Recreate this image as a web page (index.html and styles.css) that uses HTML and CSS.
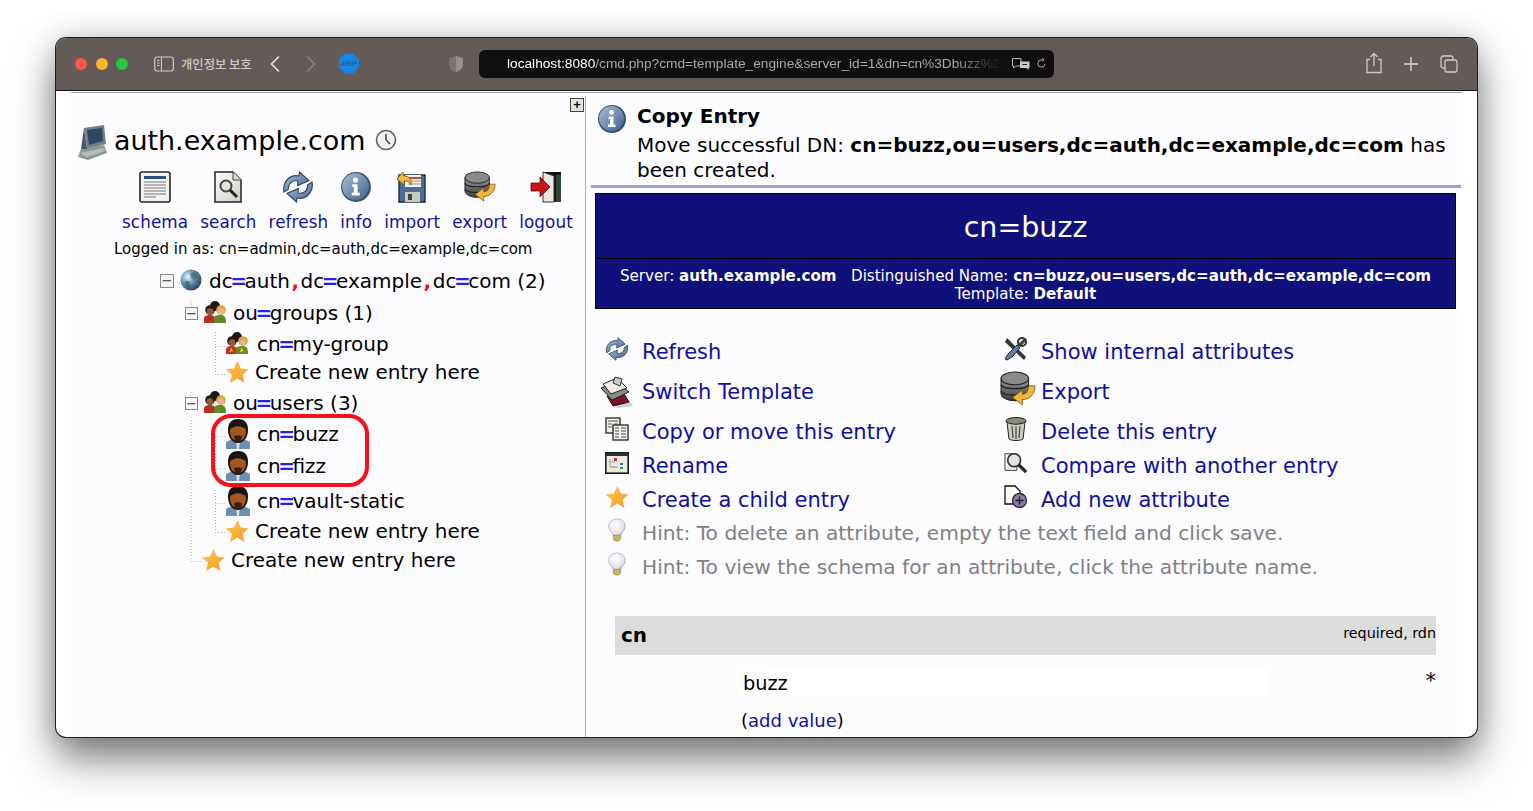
FILE: index.html
```html
<!DOCTYPE html>
<html lang="en">
<head>
<meta charset="utf-8">
<title>phpLDAPadmin</title>
<link rel="stylesheet" href="styles.css">
</head>
<body>
<svg class="sprite" aria-hidden="true">
  <defs>
    <linearGradient id="gBlue" x1="0" y1="0" x2="1" y2="1"><stop offset="0" stop-color="#a9bfd8"/><stop offset="1" stop-color="#3f648e"/></linearGradient>
    <linearGradient id="gGrey" x1="0" y1="0" x2="0" y2="1"><stop offset="0" stop-color="#9a9a9a"/><stop offset="1" stop-color="#3c3c3c"/></linearGradient>
    <linearGradient id="gPaper" x1="0" y1="0" x2="1" y2="1"><stop offset="0" stop-color="#ffffff"/><stop offset="1" stop-color="#cfcdc4"/></linearGradient>
    <linearGradient id="gStar" x1="0" y1="0" x2="1" y2="1"><stop offset="0" stop-color="#ffc85a"/><stop offset="1" stop-color="#f59a1f"/></linearGradient>
    <radialGradient id="gGlobe" cx=".35" cy=".35" r=".75"><stop offset="0" stop-color="#e8f1f8"/><stop offset=".5" stop-color="#5d8cb8"/><stop offset="1" stop-color="#1e3650"/></radialGradient>
    <radialGradient id="gBulb" cx=".4" cy=".35" r=".7"><stop offset="0" stop-color="#ffffff"/><stop offset=".75" stop-color="#dfe4e8"/><stop offset="1" stop-color="#9fa6ac"/></radialGradient>

    <symbol id="i-server" viewBox="0 0 32 38">
      <path d="M8 4 28 1 30 20 11 25Z" fill="#6f7f8c"/>
      <path d="M11 6 26 4 27 17 13 21Z" fill="#2c4a66"/>
      <path d="M5 25 28 21 31 29 12 36 2 33Z" fill="#8d9794"/>
      <path d="M4 29 27 24 29 27 11 33Z" fill="#b4bcb8"/>
      <path d="M8 4 11 25 5 25Z" fill="#495864"/>
    </symbol>
    <symbol id="i-clock" viewBox="0 0 22 22">
      <circle cx="11" cy="11" r="9.5" fill="#f1f1ee" stroke="#5f5f5f" stroke-width="1.6"/>
      <path d="M11 5v6l4 4" fill="none" stroke="#333" stroke-width="1.4"/>
    </symbol>
    <symbol id="i-schema" viewBox="0 0 32 32">
      <rect x="1" y="1" width="30" height="30" rx="2" fill="#f3f3ef" stroke="#222" stroke-width="1.6"/>
      <rect x="5" y="5" width="22" height="3" fill="#2c4f7c"/>
      <path d="M5 11h22M5 14h22M5 17h22M5 20h22M5 23h22M5 26h12" stroke="#777" stroke-width="1.2"/>
    </symbol>
    <symbol id="i-search" viewBox="0 0 30 32">
      <path d="M2 1H20L28 9V31H2Z" fill="url(#gPaper)" stroke="#222" stroke-width="1.5"/>
      <path d="M20 1V9H28" fill="#ddd" stroke="#444"/>
      <circle cx="13" cy="15" r="5.5" fill="#dfe6dd" stroke="#444" stroke-width="2"/>
      <path d="M17 19 24 26" stroke="#222" stroke-width="3"/>
    </symbol>
    <symbol id="i-refresh" viewBox="0 0 32 32">
      <path d="M2 21C0 11 8 3 17 5L17.500 1 27 9.500 15.500 14.500 16 10C11 9 6 12 6.500 18Z" fill="url(#gBlue)" stroke="#2f4256" stroke-width="1.100"/>
      <path d="M30 11C32 21 24 29 15 27L14.500 31 5 22.500 16.500 17.500 16 22C21 23 26 20 25.500 14Z" fill="url(#gBlue)" stroke="#2f4256" stroke-width="1.100"/>
    </symbol>
    <symbol id="i-info" viewBox="0 0 30 30">
      <circle cx="15" cy="15" r="14" fill="#38506a"/>
      <circle cx="14.5" cy="14.5" r="12.5" fill="url(#gBlue)"/>
      <circle cx="14.5" cy="8.5" r="2.4" fill="#fff"/>
      <path d="M11.5 12.5h5v8h2v2.500h-7.500v-2.500h2v-5.500h-1.500Z" fill="#fff"/>
    </symbol>
    <symbol id="i-import" viewBox="0 0 32 32">
      <path d="M3 4H29V31H3Z" fill="#4c6d8e" stroke="#1d2a38" stroke-width="1.4"/>
      <rect x="9" y="4" width="16" height="12" fill="#f3f0e6"/>
      <path d="M9 7h16" stroke="#c94a3c" stroke-width="2"/><path d="M12 10h13M12 13h13" stroke="#999"/>
      <rect x="9" y="21" width="15" height="10" fill="#c9c9c2"/><rect x="12" y="23" width="4" height="6" fill="#444"/>
      <path d="M1 8 7 1 8 5C13 5 16 8 15 14 13 10 11 10 8 10V14Z" fill="#f2b63a" stroke="#7a5510" stroke-width=".8"/>
    </symbol>
    <symbol id="i-db" viewBox="0 0 34 34">
      <path d="M1 7V21C1 25 7 28 14 28S27 25 27 21V7Z" fill="url(#gGrey)" stroke="#222"/>
      <ellipse cx="14" cy="7" rx="13" ry="6" fill="#8a8a8a" stroke="#222"/>
      <path d="M1 13C3 18 25 18 27 13M1 19C3 24 25 24 27 19" fill="none" stroke="#1c1c1c" stroke-width="1.2"/>
      <path d="M33 14C33 23 27 27 21 27V32L12 25 21 18V22C25 22 27 19 27 14Z" fill="#f2b63a" stroke="#8a6212" stroke-width=".9"/>
    </symbol>
    <symbol id="i-logout" viewBox="0 0 32 32">
      <rect x="13" y="1" width="18" height="30" fill="#111"/>
      <path d="M13 1 24 5V31H13Z" fill="#e9e7dc" stroke="#333"/>
      <path d="M26 4h5v27h-5Z" fill="#2e4636"/>
      <path d="M1 12H10V6L20 16 10 26V20H1Z" fill="#c5141a" stroke="#5b0a0c" stroke-width=".8"/>
    </symbol>
    <symbol id="i-globe" viewBox="0 0 22 22">
      <circle cx="11" cy="11" r="10.500" fill="url(#gGlobe)"/>
      <path d="M10 4 15 3 18 8 14 11 11 9ZM5 12 9 12 11 17 8 20 5 16Z" fill="#3a5b52" opacity=".6"/>
    </symbol>
    <symbol id="i-group" viewBox="0 0 22 22">
      <circle cx="11" cy="5" r="5" fill="#1f1713"/>
      <circle cx="17" cy="9" r="4.800" fill="#d9a93c"/>
      <circle cx="17" cy="10.500" r="3.200" fill="#e7b489"/>
      <circle cx="6" cy="9" r="4.800" fill="#1f1713"/>
      <circle cx="6" cy="10.500" r="3.300" fill="#9a5a30"/>
      <path d="M0 22V17C1 14 4 14 6 14 10 14 12 16 12 22Z" fill="#bb2b22"/>
      <path d="M10 22V17C11 14 14 14 16 14 20 14 22 15 22 22Z" fill="#5f8a2c"/>
    </symbol>
    <symbol id="i-group2" viewBox="0 0 22 22">
      <circle cx="11" cy="5" r="5" fill="#1f1713"/>
      <circle cx="17" cy="9" r="4.800" fill="#d9a93c"/>
      <circle cx="17" cy="10.500" r="3.200" fill="#e7b489"/>
      <circle cx="6" cy="9" r="4.800" fill="#1f1713"/>
      <circle cx="6" cy="10.500" r="3.300" fill="#9a5a30"/>
      <path d="M0 22V17C1 14 4 14 6 14 10 14 12 16 12 22Z" fill="#cc2d22"/>
      <path d="M10 22V17C11 14 14 14 16 14 20 14 22 15 22 22Z" fill="#6c8a22"/>
      <path d="M5 15.500 7 19 3.500 20ZM15.500 15.500 17.500 19 14 20Z" fill="#f5d23c"/>
    </symbol>
    <symbol id="i-star" viewBox="0 0 24 24">
      <path d="M12.500 1 15.800 8.600 23.500 9.500 17.600 14.700 19.500 23 12.500 18.600 5 23 7 14.700 .5 9.500 8.800 8.600Z" fill="url(#gStar)"/>
    </symbol>
    <symbol id="i-person" viewBox="0 0 24 30">
      <path d="M0 30V23C3 21 7 20 12 20S21 21 24 23V30Z" fill="#6f8eb0"/>
      <path d="M10 22h4l-1 8h-2Z" fill="#d6dde4"/>
      <path d="M12 0C5 0 2 4 2 11 2 18 6 24 12 24S22 18 22 11C22 4 19 0 12 0Z" fill="#1a1411"/>
      <path d="M4 11C7 6 17 6 20 11 20 18 17 22 12 22 7 22 4 18 4 11Z" fill="#a5581f"/>
      <path d="M8 17C10 16 14 16 16 17 16 20 14 23 12 23 10 23 8 20 8 17Z" fill="#3a2010"/>
    </symbol>
    <symbol id="i-template" viewBox="0 0 36 32">
      <path d="M14 22 30 24 34 30 18 32Z" fill="#999" opacity=".5"/>
      <path d="M8 20 25 18 30 26 14 30Z" fill="#7a1420" stroke="#2a0a0c"/>
      <path d="M2 12 18 6 30 16 13 24Z" fill="#8a8a88" stroke="#222"/>
      <path d="M4 8 18 2 28 12 12 18Z" fill="#ececea" stroke="#222"/>
      <path d="M16 1 23 3 21 10 14 7Z" fill="#c9c9c5" stroke="#333"/>
    </symbol>
    <symbol id="i-copy" viewBox="0 0 24 24">
      <rect x="1" y="1" width="14" height="15" fill="#f1f1ec" stroke="#222" stroke-width="1.300"/>
      <path d="M3 4h10M3 7h4M9 7h4M3 10h4" stroke="#555"/>
      <rect x="8" y="8" width="15" height="15" fill="#f1f1ec" stroke="#222" stroke-width="1.300"/>
      <path d="M10 11h4M16 11h5M10 14h4M16 14h5M10 17h4M16 17h5M10 20h4M16 20h5" stroke="#444"/>
    </symbol>
    <symbol id="i-rename" viewBox="0 0 24 22">
      <rect x=".8" y=".8" width="22.400" height="20.400" fill="#ece9df" stroke="#1a1a1a" stroke-width="1.600"/>
      <rect x="1" y="1" width="22" height="3" fill="#2a2f38"/>
      <path d="M5 7V15H10M5 10H10M13 15H8" stroke="#9a9a9a" fill="none"/>
      <rect x="9" y="6" width="3" height="3" fill="#c43030"/><rect x="15" y="11" width="3" height="2" fill="#2f6fb0"/><rect x="15" y="15" width="3" height="2" fill="#3a9a48"/>
    </symbol>
    <symbol id="i-tools" viewBox="0 0 24 24">
      <path d="M3 1 22 20 20 23 1 5Z" fill="#333"/>
      <path d="M21 1 23 3 16 10 13 8Z" fill="#444"/>
      <path d="M13 8 4 17 1 22 3 23 8 20 16 11Z" fill="#5e7f9f" stroke="#233"/>
      <circle cx="18" cy="5" r="4" fill="none" stroke="#333" stroke-width="2"/>
    </symbol>
    <symbol id="i-trash" viewBox="0 0 22 24">
      <ellipse cx="11" cy="4" rx="10" ry="3.500" fill="#8b8b80" stroke="#222"/>
      <path d="M2 5 4 22C6 24 16 24 18 22L20 5C16 8 6 8 2 5Z" fill="#cfcdbf" stroke="#222"/>
      <path d="M7 9 8 21M11 9V22M15 9 14 21" stroke="#555" stroke-width="1.400"/>
    </symbol>
    <symbol id="i-compare" viewBox="0 0 26 24">
      <path d="M1 2H14V20H1Z" fill="#f4f4f0" stroke="#333"/>
      <circle cx="11" cy="9" r="7" fill="#dfe4e4" stroke="#333" stroke-width="1.800"/>
      <path d="M16 14 24 22" stroke="#222" stroke-width="3.500"/>
    </symbol>
    <symbol id="i-add" viewBox="0 0 24 24">
      <path d="M1 1H11L16 6V19H1Z" fill="#f8f8f4" stroke="#111" stroke-width="1.300"/>
      <circle cx="15.500" cy="15.500" r="7" fill="#8a7aa8" stroke="#2c2438" stroke-width="1.300"/>
      <path d="M15.500 11.500v8M11.500 15.500h8" stroke="#1c1428" stroke-width="1.400"/>
    </symbol>
    <symbol id="i-bulb" viewBox="0 0 20 26">
      <path d="M10 1C4.500 1 1 5 1 9.500 1 13.500 5 15 6 19H14C15 15 19 13.500 19 9.500 19 5 15.500 1 10 1Z" fill="url(#gBulb)" stroke="#a8aeb2" stroke-width=".8"/>
      <path d="M6 19H14V23L12 25H8L6 23Z" fill="#c9b45c" stroke="#8f8240" stroke-width=".6"/>
    </symbol>
  </defs>
</svg>

<main class="window">
  <header class="titlebar">
    <div class="lights"><span class="light red"></span><span class="light amber"></span><span class="light green"></span></div>
    <svg class="bar-icon sidebar-icon" viewBox="0 0 20 18"><rect x=".7" y="2" width="18.600" height="14" rx="2.500" fill="none" stroke="#cfcac7" stroke-width="1.200"/><path d="M7.500 2v14M3 5.500h2.500M3 8h2.500M3 10.500h2.500" stroke="#cfcac7" stroke-width="1.100"/></svg>
    <span class="privacy">개인정보 보호</span>
    <svg class="bar-icon chevron" viewBox="0 0 12 18"><path d="M10 1.500 2.500 9 10 16.500" fill="none" stroke="#e4e0de" stroke-width="1.700"/></svg>
    <svg class="bar-icon chevron forward" viewBox="0 0 12 18"><path d="M2 1.500 9.500 9 2 16.500" fill="none" stroke="#8a8280" stroke-width="1.700"/></svg>
    <span class="abp">ABP</span>
    <svg class="bar-icon shield" viewBox="0 0 16 18"><path d="M8 1 15 3V9C15 13 12 16 8 17 4 16 1 13 1 9V3Z" fill="#7d7573"/><path d="M8 1 15 3V9C15 13 12 16 8 17Z" fill="#968f8d"/></svg>
    <div class="urlbar">
      <span class="url"><b class="host">localhost:8080</b>/cmd.php?cmd=template_engine&amp;server_id=1&amp;dn=cn%3Dbuzz%2</span>
      <svg class="bar-icon translate" viewBox="0 0 20 14"><path d="M1.500 1.500H10V9H4.500L2.500 11V9H1.500Z" fill="none" stroke="#bdbdbd"/><path d="M9 4.500H18.500V11H17.500V13L15.500 11H9Z" fill="#c9c9c9"/><path d="M11.500 7.500h4.500" stroke="#111"/></svg>
      <svg class="bar-icon reload" viewBox="0 0 12 12"><path d="M9.800 6.500A4 4 0 1 1 6 2H8.500M7 .5 8.800 2 7 3.500" fill="none" stroke="#bdbdbd" stroke-width="1"/></svg>
    </div>
    <svg class="bar-icon share" viewBox="0 0 18 22"><path d="M5 7.500H2V20.500H16V7.500H13M9 14V1.500M5.500 5 9 1.500 12.500 5" fill="none" stroke="#cfcac7" stroke-width="1.300"/></svg>
    <svg class="bar-icon plus" viewBox="0 0 16 16"><path d="M8 1V15M1 8H15" stroke="#d8d4d2" stroke-width="1.400"/></svg>
    <svg class="bar-icon tabs" viewBox="0 0 18 18"><rect x="1" y="1" width="12" height="12" rx="2" fill="none" stroke="#cfcac7" stroke-width="1.300"/><rect x="5" y="5" width="12" height="12" rx="2" fill="#645a58" stroke="#cfcac7" stroke-width="1.300"/></svg>
  </header>

  <div class="page">
    <div class="rule"></div>
    <div class="frames">
      <aside class="left">
        <div class="expand-row"><span class="expand-btn">+</span></div>
        <div class="server-head">
          <svg class="server-icon"><use href="#i-server"/></svg>
          <h1 class="server-name">auth.example.com</h1>
          <svg class="clock-icon"><use href="#i-clock"/></svg>
        </div>
        <nav class="nav">
          <a class="nav-item"><svg class="nav-icon"><use href="#i-schema"/></svg><span>schema</span></a>
          <a class="nav-item"><svg class="nav-icon"><use href="#i-search"/></svg><span>search</span></a>
          <a class="nav-item"><svg class="nav-icon"><use href="#i-refresh"/></svg><span>refresh</span></a>
          <a class="nav-item"><svg class="nav-icon"><use href="#i-info"/></svg><span>info</span></a>
          <a class="nav-item"><svg class="nav-icon"><use href="#i-import"/></svg><span>import</span></a>
          <a class="nav-item"><svg class="nav-icon"><use href="#i-db"/></svg><span>export</span></a>
          <a class="nav-item"><svg class="nav-icon"><use href="#i-logout"/></svg><span>logout</span></a>
        </nav>
        <p class="logged">Logged in as: cn=admin,dc=auth,dc=example,dc=com</p>
        <div class="tree">
          <svg class="tree-lines" viewBox="0 0 100 300">
            <path d="M20 18.500V36M20 110V127M20 135V279.500H32M44.500 50V92.500H55M44.500 64.500H56M44.500 140V166M44.500 172V198M44.500 208V250.500H55M44.500 154.500H56M44.500 186.500H56M44.500 221.500H56M8 1.500H19"/>
          </svg>
          <div class="row r0"><span class="toggle">−</span><svg class="ti globe"><use href="#i-globe"/></svg><span class="dn">dc<i>=</i>auth<u>,</u>dc<i>=</i>example<u>,</u>dc<i>=</i>com (2)</span></div>
          <div class="row r1"><span class="toggle small">−</span><svg class="ti group"><use href="#i-group"/></svg><span class="dn">ou<i>=</i>groups (1)</span></div>
          <div class="row r2"><svg class="ti group"><use href="#i-group2"/></svg><span class="dn">cn<i>=</i>my-group</span></div>
          <div class="row r2 new"><svg class="ti star"><use href="#i-star"/></svg><span class="dn">Create new entry here</span></div>
          <div class="row r1"><span class="toggle small">−</span><svg class="ti group"><use href="#i-group"/></svg><span class="dn">ou<i>=</i>users (3)</span></div>
          <div class="row r2"><svg class="ti person"><use href="#i-person"/></svg><span class="dn">cn<i>=</i>buzz</span></div>
          <div class="row r2"><svg class="ti person"><use href="#i-person"/></svg><span class="dn">cn<i>=</i>fizz</span></div>
          <div class="row r2"><svg class="ti person"><use href="#i-person"/></svg><span class="dn">cn<i>=</i>vault-static</span></div>
          <div class="row r2 new"><svg class="ti star"><use href="#i-star"/></svg><span class="dn">Create new entry here</span></div>
          <div class="row r1b new"><svg class="ti star"><use href="#i-star"/></svg><span class="dn">Create new entry here</span></div>
          <div class="highlight"></div>
        </div>
      </aside>

      <section class="right">
        <div class="notice">
          <svg class="notice-icon"><use href="#i-info"/></svg>
          <div class="notice-body">
            <h2 class="notice-title">Copy Entry</h2>
            <p class="notice-text">Move successful DN: <b>cn=buzz,ou=users,dc=auth,dc=example,dc=com</b> has been created.</p>
          </div>
        </div>
        <div class="hr"></div>
        <div class="entry-head">
          <div class="entry-title">cn=buzz</div>
          <div class="entry-sub">Server: <b>auth.example.com</b> &nbsp; Distinguished Name: <b>cn=buzz,ou=users,dc=auth,dc=example,dc=com</b><br>Template: <b>Default</b></div>
        </div>
        <div class="actions">
          <a class="act"><span class="act-i"><svg class="ai s24"><use href="#i-refresh"/></svg></span>Refresh</a>
          <a class="act"><span class="act-i"><svg class="ai s24"><use href="#i-tools"/></svg></span>Show internal attributes</a>
          <a class="act"><span class="act-i"><svg class="ai s36 tpl"><use href="#i-template"/></svg></span>Switch Template</a>
          <a class="act"><span class="act-i export-i"><svg class="ai s36"><use href="#i-db"/></svg></span>Export</a>
          <a class="act"><span class="act-i"><svg class="ai s24"><use href="#i-copy"/></svg></span>Copy or move this entry</a>
          <a class="act"><span class="act-i"><svg class="ai s24"><use href="#i-trash"/></svg></span>Delete this entry</a>
          <a class="act"><span class="act-i"><svg class="ai s24"><use href="#i-rename"/></svg></span>Rename</a>
          <a class="act"><span class="act-i"><svg class="ai s24"><use href="#i-compare"/></svg></span>Compare with another entry</a>
          <a class="act"><span class="act-i"><svg class="ai s24"><use href="#i-star"/></svg></span>Create a child entry</a>
          <a class="act"><span class="act-i"><svg class="ai s24"><use href="#i-add"/></svg></span>Add new attribute</a>
          <div class="act hint"><span class="act-i"><svg class="ai s24"><use href="#i-bulb"/></svg></span>Hint: To delete an attribute, empty the text field and click save.</div>
          <div class="act hint"><span class="act-i"><svg class="ai s24"><use href="#i-bulb"/></svg></span>Hint: To view the schema for an attribute, click the attribute name.</div>
        </div>
        <div class="attr-bar"><b class="attr-name">cn</b><span class="attr-note">required, rdn</span></div>
        <div class="attr-value">
          <input class="value-input" type="text" value="buzz">
          <span class="asterisk">*</span>
        </div>
        <div class="add-value">(<a>add value</a>)</div>
      </section>
    </div>
  </div>
</main>
</body>
</html>
```
FILE: styles.css
```css
* { box-sizing: border-box; }
html, body { margin: 0; padding: 0; height: 811px; overflow: hidden; background: #fff; }
body { padding: 38px 0 0 56px; font-family: "DejaVu Sans", Verdana, sans-serif; color: #000; }
.sprite { position: absolute; width: 0; height: 0; }
svg { display: block; flex: none; }
a { color: #10109c; text-decoration: none; }

.window { width: 1421px; height: 699px; border-radius: 10px; overflow: hidden; background: #fff; box-shadow: 0 0 0 1px #1e1e1e, 0 22px 42px rgba(0,0,0,.5), 0 0 30px rgba(0,0,0,.18); display: flex; flex-direction: column; }

.titlebar { height: 53px; flex: none; background: #645a58; border-bottom: 1px solid #151515; display: flex; align-items: center; padding: 0 0 1px 19px; }
.lights { display: flex; gap: 8.500px; width: 53px; }
.light { width: 12px; height: 12px; border-radius: 50%; flex: none; }
.red { background: #fc5753; }
.amber { background: #fdb52e; }
.green { background: #28c73f; }
.sidebar-icon { width: 20px; height: 18px; margin-left: 26px; }
.privacy { font-family: "Noto Sans CJK KR", sans-serif; font-size: 12.300px; color: #cfcac7; margin-left: 7px; width: 71px; white-space: nowrap; font-weight: 500; }
.chevron { width: 12px; height: 18px; margin-left: 17px; }
.forward { margin-left: 24px; }
.abp { margin-left: 22px; width: 20px; height: 20px; background: #1a84e0; clip-path: polygon(30% 0, 70% 0, 100% 30%, 100% 70%, 70% 100%, 30% 100%, 0 70%, 0 30%); color: #2e5f92; font: 700 8px/20px "Liberation Sans", sans-serif; text-align: center; }
.shield { width: 16px; height: 18px; margin-left: 89px; }
.urlbar { width: 575px; height: 28px; margin-left: 15px; background: #0f0f0f; border-radius: 6px; display: flex; align-items: center; padding-left: 28px; position: relative; flex: none; }
.url { width: 495px; flex: none; overflow: hidden; white-space: nowrap; font: 13.700px/16px "Liberation Sans", sans-serif; color: #a8a8a8; padding-top: 1px; height: 17px; -webkit-mask-image: linear-gradient(90deg, #000 90%, transparent 100%); mask-image: linear-gradient(90deg, #000 90%, transparent 100%); }
.host { font-weight: 400; color: #fff; }
.translate { width: 20px; height: 14px; margin-left: 9px; }
.reload { width: 11px; height: 11px; margin-left: 5px; }
.share { width: 18px; height: 22px; margin-left: 311px; margin-top: -2px; }
.plus { width: 16px; height: 16px; margin-left: 20px; }
.tabs { width: 18px; height: 18px; margin-left: 21px; }

.page { flex: 1; min-height: 0; padding: 1px 15px 0; display: flex; flex-direction: column; }
.rule { height: 1px; background: #9a9ac0; flex: none; }
.frames { flex: 1; min-height: 0; margin-top: 3px; display: flex; background: #fcfcff; }

.left { width: 515px; flex: none; border-right: 1px solid #aaaacc; }
.expand-row { display: flex; justify-content: flex-end; padding: 2px 1px 0 0; height: 26px; }
.expand-btn { width: 14px; height: 14px; border: 1px solid #444; background: #e4e4dc; font: 700 13px/11px "Liberation Sans", sans-serif; text-align: center; color: #111; }
.server-head { display: flex; align-items: center; padding-left: 5px; height: 38px; }
.server-icon { width: 32px; height: 38px; margin-top: 3px; }
.server-name { font-size: 26.900px; font-weight: 400; margin: 0 0 0 6px; white-space: nowrap; line-height: 34px; }
.clock-icon { width: 22px; height: 22px; margin-left: 10px; margin-bottom: 2px; }

.nav { display: flex; gap: 12px; padding: 11px 0 0 51px; }
.nav-item { display: flex; flex-direction: column; align-items: center; font-size: 16.800px; letter-spacing: .1px; line-height: 22px; }
.nav-icon { width: 32px; height: 32px; margin-bottom: 8px; }
.logged { margin: 6px 0 0 43px; font-size: 15px; line-height: 20px; white-space: nowrap; }

.tree { position: relative; margin-top: 7px; display: grid; grid-template-rows: 30px 32px 31px 28px 31px 31px 32px 35px 30px 29px; }
.tree-lines { position: absolute; top: 16px; left: 100px; width: 100px; height: 300px; fill: none; stroke: #a8a8a8; stroke-width: 1; stroke-dasharray: 1 2; }
.row { display: flex; align-items: center; height: 30px; align-self: end; font-size: 20px; white-space: nowrap; position: relative; }
.r0 { padding-left: 89px; }
.r1 { padding-left: 114px; }
.r2 { padding-left: 155px; }
.r1b { padding-left: 130px; }
.dn i { font-style: normal; color: #2222ee; font-weight: 700; margin: 0 -2.500px; }
.dn u { text-decoration: none; color: #ee1111; font-weight: 700; margin: 0 1.500px; }
.toggle { width: 14px; height: 14px; border: 1px solid #888; background: #f4f4f4; font: 400 13px/11px "DejaVu Sans", sans-serif; text-align: center; color: #333; flex: none; }
.toggle.small { width: 13px; height: 13px; }
.ti { margin: 0 7px 0 6px; }
.globe { width: 22px; height: 22px; margin-bottom: 2px; }
.group { width: 22px; height: 22px; margin-bottom: 3px; }
.star { width: 24px; height: 24px; margin-left: -1px; margin-right: 6px; }
.r1b .star { margin-left: 0; }
.person { width: 24px; height: 30px; margin-left: 0; margin-right: 7px; }
.r2 .group { margin-left: 0; margin-right: 9px; }
.highlight { position: absolute; left: 140px; top: 148px; width: 158px; height: 73px; border: 4px solid #f5111a; border-radius: 20px; }

.right { flex: 1; min-width: 0; overflow: hidden; padding: 0 1px 0 5px; }
.notice { display: flex; height: 89px; }
.notice-icon { width: 30px; height: 30px; margin: 8px 0 0 6px; }
.notice-body { margin-left: 10px; }
.notice-title { margin: 5px 0 0; font-size: 20px; line-height: 30px; font-weight: 700; }
.notice-text { margin: 2px 0 0; font-size: 20px; line-height: 25px; }
.hr { height: 3px; background: #a0a0cc; }
.entry-head { margin: 5px 5px 0 4px; border: 1px solid #000; background: #10107a; color: #fff; text-align: center; }
.entry-title { height: 65px; line-height: 68px; font-size: 28.500px; border-bottom: 1px solid #000; }
.entry-sub { font-size: 15.100px; line-height: 18px; padding: 8px 0 5px; }

.actions { display: grid; grid-template-columns: 399px 1fr; grid-template-rows: 34px 40px 40px 34px 34px 34px 34px; margin: 26px 0 0 5px; font-size: 21px; }
.act { display: flex; align-items: center; white-space: nowrap; height: 34px; align-self: end; }
.act-i { width: 46px; height: 100%; flex: none; display: flex; justify-content: center; align-items: center; padding-right: 4px; }
.export-i { padding-right: 0; }
.ai { margin-top: -6px; }
.s24 { width: 24px; height: 24px; }
.s36 { width: 36px; height: 36px; }
.tpl { margin-top: 0; }
.hint { grid-column: 1 / -1; color: #808080; font-size: 20.200px; padding-bottom: 2px; }

.attr-bar { margin: 31px 25px 0 24px; height: 39px; background: #dcdcdc; display: flex; justify-content: space-between; padding: 0 0 0 6px; }
.attr-name { font-size: 20px; line-height: 39px; }
.attr-note { font-size: 14.300px; line-height: 34px; }
.attr-value { display: flex; margin: 14px 25px 0 147px; height: 27px; position: relative; }
.value-input { width: 531px; height: 27px; border: 0; background: #fff; padding: 2px 5px 0; font: 19.300px "DejaVu Sans", sans-serif; outline: 0; color: #000; }
.asterisk { margin-left: auto; font-size: 21px; line-height: 24px; }
.add-value { margin: 13px 0 0 150px; font-size: 18px; line-height: 24px; }
```
